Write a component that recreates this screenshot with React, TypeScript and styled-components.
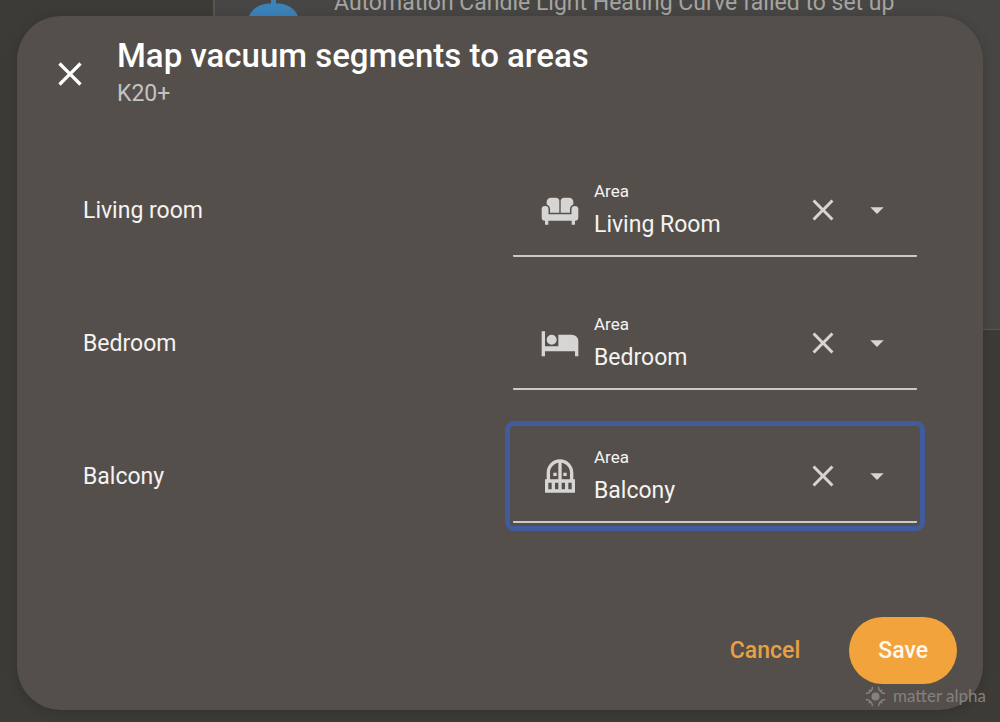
import React, { useState } from "react";
import styled, { createGlobalStyle } from "styled-components";

const GlobalStyle = createGlobalStyle`
  * { box-sizing: border-box; }
  body {
    margin: 0;
    background: #3c3b36;
    color: #f4f3f2;
    font-family: Roboto, "Liberation Sans", sans-serif;
    font-size: 23px;
  }
  button, select { font: inherit; color: inherit; }
`;

const Page = styled.div`
  position: relative;
  min-height: 100vh;
  overflow: hidden;
`;

const IssuesCard = styled.section`
  position: absolute;
  top: -24px;
  left: 213px;
  right: 0;
  height: 354px;
  border-left: 2px solid #575653;
  border-bottom: 1px solid #575653;
  background: #474644;
`;

const Issue = styled.div`
  display: flex;
  align-items: flex-start;
  gap: 34px;
  padding: 11px 32px;
  color: #a5a4a2;
  line-height: 32px;
  white-space: nowrap;
`;

const Overlay = styled.div`
  position: relative;
  display: flex;
  min-height: 100vh;
  padding: 16px 17px 12px;
`;

const Dialog = styled.form`
  display: flex;
  flex: 1;
  flex-direction: column;
  min-width: 0;
  border-radius: 44px;
  background: #544f4b;
  box-shadow: 0 2px 12px rgba(0, 0, 0, 0.16);
`;

const Header = styled.header`
  display: flex;
  align-items: center;
  gap: 22px;
  padding: 20px 28px 0;
`;

const IconButton = styled.button<{ $bright?: boolean }>`
  display: flex;
  flex: none;
  align-items: center;
  justify-content: center;
  width: 50px;
  height: 50px;
  padding: 0;
  border: 0;
  border-radius: 50%;
  background: none;
  color: ${(p) => (p.$bright ? "#ffffff" : "#d6d5d3")};
  cursor: pointer;
`;

const Title = styled.h1`
  margin: 0;
  color: #ffffff;
  font-size: 33px;
  font-weight: 500;
  line-height: 40px;
`;

const Subtitle = styled.p`
  margin: 0;
  color: #c4c2c0;
  line-height: 36px;
`;

const Rows = styled.div`
  display: flex;
  flex: 1;
  flex-direction: column;
  gap: 39px;
  padding: 51px 66px;
`;

const Row = styled.div`
  display: flex;
  align-items: center;
  justify-content: space-between;
  gap: 24px;
`;

const Field = styled.div<{ $focused?: boolean }>`
  display: flex;
  flex: 0 1 404px;
  align-items: center;
  gap: 4px;
  height: 94px;
  padding: 2px 15px 0 27px;
  border-bottom: 2px solid #cfc9c6;
  border-radius: 1px;
  outline: ${(p) => (p.$focused ? "5px solid #415b9c" : "none")};
  outline-offset: 3px;
`;

const FieldText = styled.div`
  display: flex;
  flex: 1;
  flex-direction: column;
  min-width: 0;
  padding: 6px 0 0 10px;
`;

const FieldLabel = styled.label`
  font-size: 17px;
  line-height: 24px;
`;

const Select = styled.select`
  appearance: none;
  width: 100%;
  height: 44px;
  padding: 0;
  border: 0;
  outline: 0;
  background: none;
  line-height: 44px;
`;

const Footer = styled.footer`
  display: flex;
  justify-content: flex-end;
  gap: 20px;
  padding: 0 26px 26px;
`;

const ActionButton = styled.button<{ $filled?: boolean }>`
  height: 67px;
  padding: 0 29px;
  border: 0;
  border-radius: 34px;
  background: ${(p) => (p.$filled ? "#f2a33c" : "none")};
  color: ${(p) => (p.$filled ? "#fff8ee" : "#e7a042")};
  font-weight: 500;
  line-height: 28px;
  cursor: pointer;
`;

const Watermark = styled.div`
  position: absolute;
  right: 14px;
  bottom: 14px;
  display: flex;
  align-items: center;
  gap: 7px;
  color: #84817e;
  font-family: Lato, "Liberation Sans", sans-serif;
  font-size: 17px;
  line-height: 24px;
  pointer-events: none;
`;

const icons = {
  close:
    "M19,6.41L17.59,5L12,10.59L6.41,5L5,6.41L10.59,12L5,17.59L6.41,19L12,13.41L17.59,19L19,17.59L13.41,12L19,6.41Z",
  down: "M7,10L12,15L17,10H7Z",
  sofa:
    "M6.5 4.6H9.5A2.1 2.1 0 0 1 11.6 6.7V13.7H6V11.4A3 3 0 0 0 4 8.7V7.1A2.5 2.5 0 0 1 6.5 4.6ZM17.5 4.6H14.5A2.1 2.1 0 0 0 12.4 6.7V13.7H18V11.4A3 3 0 0 1 20 8.7V7.1A2.5 2.5 0 0 0 17.5 4.6ZM3 9.6A2 2 0 0 1 5.1 11.6V14.6H18.9V11.6A2 2 0 0 1 23 11.6V16.5A2 2 0 0 1 21 18.5V20.8H19V18.5H5V20.8H3V18.5A2 2 0 0 1 1 16.5V11.6A2 2 0 0 1 3 9.6Z",
  bed:
    "M19,7H11V14H3V5H1V20H3V17H21V20H23V11A4,4 0 0,0 19,7M7,13A3,3 0 0,0 10,10A3,3 0 0,0 7,7A3,3 0 0,0 4,10A3,3 0 0,0 7,13Z",
  balcony:
    "M10 10V12H8V10H10M16 12V10H14V12H16M21 14V22H3V14H4V10C4 5.58 7.58 2 12 2S20 5.58 20 10V14H21M7 16H5V20H7V16M11 16H9V20H11V16M11 4.08C8.16 4.56 6 7.03 6 10V14H11V4.08M13 14H18V10C18 7.03 15.84 4.56 13 4.08V14M15 16H13V20H15V16M19 16H17V20H19V16Z",
};

type IconName = keyof typeof icons;

const Svg = styled.svg`
  display: block;
  flex: none;
  fill: #d6d5d3;
`;

const ButtonSvg = styled(Svg)`
  fill: currentColor;
`;

const segments: { name: string; area: string; icon: IconName }[] = [
  { name: "Living room", area: "Living Room", icon: "sofa" },
  { name: "Bedroom", area: "Bedroom", icon: "bed" },
  { name: "Balcony", area: "Balcony", icon: "balcony" },
];

function Glyph({ name, size }: { name: IconName; size: number }) {
  return (
    <ButtonSvg width={size} height={size} viewBox="0 0 24 24" aria-hidden="true">
      <path d={icons[name]} />
    </ButtonSvg>
  );
}

function AreaField({
  id,
  icon,
  initial,
  focused,
}: {
  id: string;
  icon: IconName;
  initial: string;
  focused: boolean;
}) {
  const [area, setArea] = useState(initial);
  return (
    <Field $focused={focused}>
      <Svg width="40" height="40" viewBox="0 0 24 24" aria-hidden="true">
        <path fillRule="evenodd" d={icons[icon]} />
      </Svg>
      <FieldText>
        <FieldLabel htmlFor={id}>Area</FieldLabel>
        <Select id={id} value={area} onChange={(e) => setArea(e.target.value)}>
          <option value="" />
          {segments.map((s) => (
            <option key={s.area}>{s.area}</option>
          ))}
        </Select>
      </FieldText>
      <IconButton type="button" aria-label="Clear area" onClick={() => setArea("")}>
        <Glyph name="close" size={36} />
      </IconButton>
      <IconButton type="button" aria-label="Show areas">
        <Glyph name="down" size={32} />
      </IconButton>
    </Field>
  );
}

export default function App() {
  return (
    <Page>
      <GlobalStyle />
      <IssuesCard>
        <Issue>
          <svg width="53" height="66" viewBox="0 0 53 66" aria-hidden="true">
            <path fill="#3b82b9" d="M24 8h5v8.500h3c10 1 17 6 20 15v24H1v-24c3-9 10-14 20-15h3z" />
          </svg>
          <span>Automation Candle Light Heating Curve failed to set up</span>
        </Issue>
      </IssuesCard>
      <Overlay>
        <Dialog role="dialog" aria-labelledby="dialog-title" onSubmit={(e) => e.preventDefault()}>
          <Header>
            <IconButton type="button" aria-label="Close" $bright>
              <Glyph name="close" size={40} />
            </IconButton>
            <div>
              <Title id="dialog-title">Map vacuum segments to areas</Title>
              <Subtitle>K20+</Subtitle>
            </div>
          </Header>
          <Rows>
            {segments.map((s, i) => (
              <Row key={s.name}>
                <span>{s.name}</span>
                <AreaField id={`area-${i}`} icon={s.icon} initial={s.area} focused={i === 2} />
              </Row>
            ))}
          </Rows>
          <Footer>
            <ActionButton type="button">Cancel</ActionButton>
            <ActionButton type="submit" $filled>
              Save
            </ActionButton>
          </Footer>
        </Dialog>
      </Overlay>
      <Watermark>
        <svg width="21" height="21" viewBox="0 0 21 21" aria-hidden="true">
          <circle cx="10.5" cy="10.5" r="4" fill="currentColor" />
          <g fill="none" stroke="currentColor" strokeWidth="1.5">
            <path d="M7.500 .800Q7.500 3.500 5.500 5.500Q3.500 7.500 .800 7.500M5.500 5.500L3.800 3.800" />
            <path d="M13.500 .800Q13.500 3.500 15.500 5.500Q17.500 7.500 20.200 7.500M15.500 5.500L17.200 3.800" />
            <path d="M7.500 20.200Q7.500 17.500 5.500 15.500Q3.500 13.500 .800 13.500M5.500 15.500L3.800 17.200" />
            <path d="M13.500 20.200Q13.500 17.500 15.500 15.500Q17.500 13.500 20.200 13.500M15.500 15.500L17.200 17.200" />
          </g>
        </svg>
        <span>matter alpha</span>
      </Watermark>
    </Page>
  );
}
